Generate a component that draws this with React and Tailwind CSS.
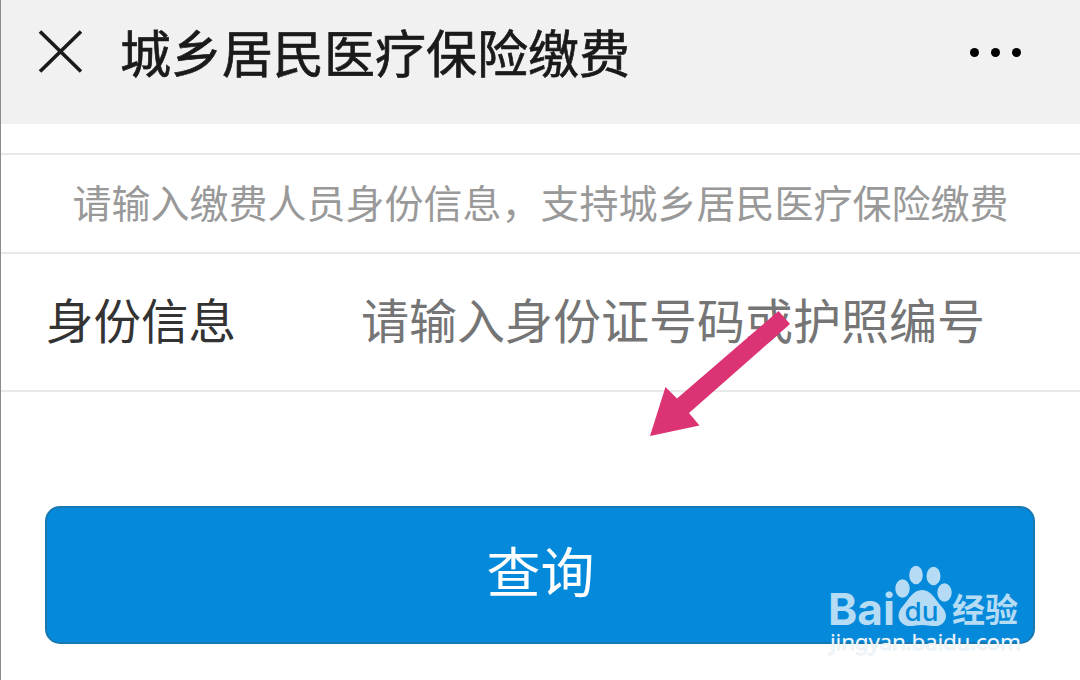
const PAW = [
  { cx: 902.5, cy: 588.5, rx: 7.2, ry: 9.2 },
  { cx: 916, cy: 575, rx: 6.8, ry: 9.2 },
  { cx: 933.5, cy: 576, rx: 7, ry: 9.2 },
  { cx: 944.5, cy: 592.5, rx: 7.2, ry: 9.2 },
]

function Header() {
  return (
    <header className="flex h-[124px] items-start justify-between bg-[#f1f1f1] pl-[37px] pr-[59px]">
      <div className="flex items-start">
        <svg className="mt-[30px] h-[44px] w-[44px] text-[#1a1a1a]" viewBox="0 0 44 44" fill="none" stroke="currentColor" strokeWidth="3.7">
          <path d="M2 1.5 43 41.5M43 1.5 2 41.5" />
        </svg>
        <h1 className="ml-[38px] whitespace-nowrap text-[51px] font-normal leading-[102px] text-[#1a1a1a] [-webkit-text-stroke:0.7px_#1a1a1a]">城乡居民医疗保险缴费</h1>
      </div>
      <div className="mt-[48px] flex gap-[12px]">
        <span className="h-[9px] w-[9px] rounded-full bg-black" />
        <span className="h-[9px] w-[9px] rounded-full bg-black" />
        <span className="h-[9px] w-[9px] rounded-full bg-black" />
      </div>
    </header>
  )
}

function Arrow() {
  return (
    <svg className="pointer-events-none absolute left-[639px] top-[300px] h-[145px] w-[160px]" viewBox="640 300 160 145">
      <path d="M778.5 311 790 324 689 413 699.5 425.5 650 436 665.5 387 677 398.5Z" fill="#db3373" />
    </svg>
  )
}

function Watermark() {
  return (
    <svg className="pointer-events-none absolute left-[819px] top-[555px] h-[110px] w-[220px]" viewBox="820 555 220 110">
      <g fill="#b5dcf4">
        <text x="828" y="624.5" fontSize="44" fontWeight="700" textLength="67" lengthAdjust="spacingAndGlyphs" fontFamily="Inter, sans-serif">Bai</text>
        {PAW.map((p) => <ellipse key={p.cx} {...p} />)}
        <path d="M922 590C913 590 909 599 903 606C897 612 897 620 903 624C909 628 914 625 922 625C930 625 936 628 942 624C948 619 947 612 941 606C935 599 931 590 922 590Z" />
        <text x="952" y="621.5" fontSize="33" fontWeight="700" textLength="66" lengthAdjust="spacingAndGlyphs" fontFamily="Noto Sans CJK SC, sans-serif">经验</text>
      </g>
      <text x="904.5" y="620.5" fontSize="26" fontWeight="500" fill="#058adb" textLength="34" lengthAdjust="spacingAndGlyphs" fontFamily="Inter, sans-serif">du</text>
      <text x="830" y="650" fontSize="22.5" fill="#eef6fb" stroke="#9aaebb" strokeOpacity="0.25" strokeWidth="1" paintOrder="stroke" textLength="191" lengthAdjust="spacing" fontFamily="Noto Sans, sans-serif">jingyan.baidu.com</text>
    </svg>
  )
}

export default function App() {
  return (
    <div className="relative h-[680px] w-[1080px] overflow-hidden border-l border-[#8c8c8c] bg-white font-['Noto_Sans_CJK_SC',sans-serif]">
      <Header />
      <main>
        <p className="mt-[29px] flex h-[101px] items-center justify-center whitespace-nowrap border-y-2 border-[#e9e9e9] pb-[5px] text-[39px] font-normal text-[#999]">
          请输入缴费人员身份信息，支持城乡居民医疗保险缴费
        </p>
        <div className="flex h-[138px] items-center border-b-2 border-[#e9e9e9] pb-[9px] pl-[45px]">
          <label className="w-[315px] pt-[2px] text-[47.5px] font-normal text-[#333]">身份信息</label>
          <span className="whitespace-nowrap text-[48px] font-normal text-[#757575]">请输入身份证号码或护照编号</span>
        </div>
        <button className="ml-[44px] mt-[114px] flex h-[138px] w-[990px] items-center justify-center rounded-[15px] border-2 border-[#1878b2] bg-[#058adb] pb-[12px] pl-[1px] text-[54px] font-normal text-white">
          查询
        </button>
      </main>
      <Arrow />
      <Watermark />
    </div>
  )
}
